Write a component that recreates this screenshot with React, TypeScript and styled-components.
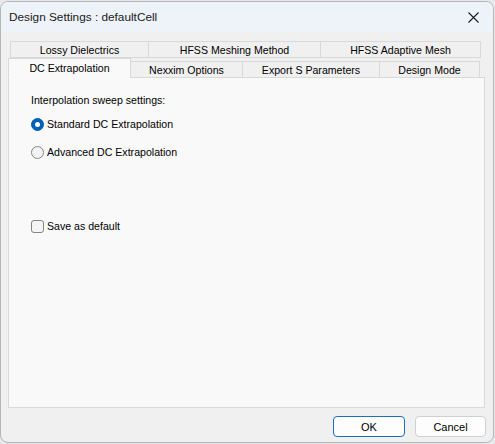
import React from 'react'
import styled, { createGlobalStyle } from 'styled-components'

const GlobalStyle = createGlobalStyle`
    html, body {
        margin: 0;
        padding: 0;
        background: #e6e8ea;
    }
    * {
        box-sizing: border-box;
    }
`

const backTabs = [
    { label: 'Lossy Dielectrics', w: 139 },
    { label: 'HFSS Meshing Method', w: 173 },
    { label: 'HFSS Adaptive Mesh', w: 161 },
]

const frontTabs = [
    { label: 'DC Extrapolation', w: 123, active: true },
    { label: 'Nexxim Options', w: 113 },
    { label: 'Export S Parameters', w: 138 },
    { label: 'Design Mode', w: 101 },
]

export default function App() {
    return (
        <>
            <GlobalStyle />
            <Window>
                <TitleBar>
                    <Title>Design Settings : defaultCell</Title>
                    <Close>
                        <svg width="11" height="11" viewBox="0 0 11 11">
                            <path d="M0.5 0.5 L10.5 10.5 M10.5 0.5 L0.5 10.5" stroke="#1a1a1a" strokeWidth="1.1" />
                        </svg>
                    </Close>
                </TitleBar>
                <Body>
                    <Tabs>
                        <TabRow $back>
                            {backTabs.map(t => <Tab key={t.label} $w={t.w}>{t.label}</Tab>)}
                        </TabRow>
                        <TabRow>
                            {frontTabs.map(t => <Tab key={t.label} $w={t.w} $active={t.active}>{t.label}</Tab>)}
                        </TabRow>
                    </Tabs>
                    <Panel>
                        <Label>Interpolation sweep settings:</Label>
                        <Option $top={9}>
                            <Radio $checked />
                            <OptText>Standard DC Extrapolation</OptText>
                        </Option>
                        <Option $top={14}>
                            <Radio />
                            <OptText>Advanced DC Extrapolation</OptText>
                        </Option>
                        <Option $top={60}>
                            <Check />
                            <OptText>Save as default</OptText>
                        </Option>
                    </Panel>
                    <Footer>
                        <Button $primary>OK</Button>
                        <Button>Cancel</Button>
                    </Footer>
                </Body>
            </Window>
        </>
    )
}

const Window = styled.div`
    margin-top: 1px;
    width: 494px;
    height: 442px;
    border: 1px solid #b4b6b8;
    border-radius: 8px;
    overflow: hidden;
    display: flex;
    flex-direction: column;
    background: #f0f0f0;
    font-family: "Liberation Sans", Arial, sans-serif;
    color: #000;
`

const TitleBar = styled.div`
    height: 30px;
    flex: none;
    display: flex;
    align-items: center;
    justify-content: space-between;
    padding: 0 0 0 8px;
    background: #eef3f9;
`

const Title = styled.div`
    font-family: "Liberation Sans", Arial, sans-serif;
    font-size: 11.8px;
    color: #1a1a1a;
`

const Close = styled.div`
    width: 46px;
    height: 30px;
    display: flex;
    align-items: center;
    justify-content: center;
    margin-right: -3px;
`

const Body = styled.div`
    flex: 1;
    display: flex;
    flex-direction: column;
    padding: 9px 7px 0 7px;
`

const Tabs = styled.div`
    display: flex;
    flex-direction: column;
    position: relative;
    z-index: 1;
`

const TabRow = styled.div<{ $back?: boolean }>`
    display: flex;
    align-items: flex-end;
    height: ${p => p.$back ? 17 : 20}px;
    padding-left: ${p => p.$back ? 2 : 0}px;
    margin-bottom: ${p => p.$back ? 0 : -1}px;
`

const Tab = styled.div<{ $w: number, $active?: boolean }>`
    width: ${p => p.$w}px;
    height: ${p => p.$active ? 20 : 17}px;
    display: flex;
    align-items: center;
    justify-content: center;
    font-size: 10.6px;
    line-height: 1;
    background: ${p => p.$active ? '#f9f9f9' : '#f0f0f0'};
    border: 1px solid #d9d9d9;
    border-bottom: ${p => p.$active ? '1px solid #f9f9f9' : '1px solid #d9d9d9'};
    margin-left: -1px;
    padding-top: ${p => p.$active ? 0 : 1}px;
    &:first-child {
        margin-left: 0;
    }
`

const Panel = styled.div`
    width: 477px;
    height: 331px;
    background: #f9f9f9;
    border: 1px solid #d9d9d9;
    padding: 14px 22px;
    display: flex;
    flex-direction: column;
`

const Label = styled.div`
    font-size: 10.6px;
    line-height: 16px;
`

const Option = styled.div<{ $top: number }>`
    display: flex;
    align-items: center;
    gap: 3px;
    margin-top: ${p => p.$top}px;
    height: 14px;
`

const OptText = styled.span`
    font-size: 10.6px;
    line-height: 14px;
`

const Radio = styled.span<{ $checked?: boolean }>`
    width: 13px;
    height: 13px;
    border-radius: 50%;
    flex: none;
    display: flex;
    align-items: center;
    justify-content: center;
    background: ${p => p.$checked ? '#005fb8' : '#f3f3f3'};
    border: 1px solid ${p => p.$checked ? '#005fb8' : '#858585'};
    &::after {
        content: '';
        display: ${p => p.$checked ? 'block' : 'none'};
        width: 5px;
        height: 5px;
        border-radius: 50%;
        background: #fff;
    }
`

const Check = styled.span`
    width: 13px;
    height: 13px;
    flex: none;
    border: 1px solid #858585;
    border-radius: 3px;
    background: #f5f5f5;
`

const Footer = styled.div`
    display: flex;
    justify-content: flex-end;
    gap: 10px;
    padding: 8px 0 0 0;
`

const Button = styled.button<{ $primary?: boolean }>`
    width: ${p => p.$primary ? 72 : 71}px;
    height: 21px;
    border-radius: 4px;
    border: 1px solid ${p => p.$primary ? '#1a6fc4' : '#d0d0d0'};
    background: #fdfdfd;
    font-family: "Liberation Sans", Arial, sans-serif;
    font-size: 11px;
    color: #000;
    padding: 0;
`
